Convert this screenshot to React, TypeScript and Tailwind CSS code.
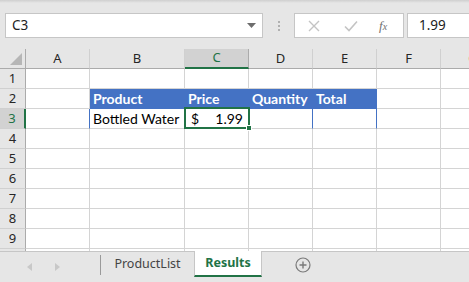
import React from "react";

const cols = ["A", "B", "C", "D", "E", "F", "G"];
const widths = [64, 95, 64, 64, 64, 64, 64];
const rows = [1, 2, 3, 4, 5, 6, 7, 8, 9];

const ui = "font-['Noto_Sans',sans-serif]";
const cellFont = "font-['Lato',sans-serif]";

function RowCells({ row }: { row: number }) {
  if (row === 2) {
    return (
      <>
        <div className="h-5 w-[64px] shrink-0 border-r border-b border-[#d4d4d4]" />
        <div className="h-5 w-[287px] shrink-0 flex items-center bg-[#4472c4] border-b border-[#4472c4] text-white font-bold text-[14px]">
          <span className="w-[95px] pl-[3px]">Product</span>
          <span className="w-[64px] pl-[3px]">Price</span>
          <span className="w-[64px] pl-[3px]">Quantity</span>
          <span className="w-[64px] pl-[3px]">Total</span>
        </div>
        <div className="h-5 w-[64px] shrink-0 border-r border-b border-[#d4d4d4]" />
        <div className="h-5 w-[64px] shrink-0 border-b border-[#d4d4d4]" />
      </>
    );
  }
  if (row === 3) {
    return (
      <>
        <div className="h-5 w-[64px] shrink-0 border-r border-b border-r-[#4472c4] border-b-[#d4d4d4]" />
        <div className="h-5 w-[95px] shrink-0 pl-[3px] flex items-center text-[14px] text-black border-r border-b border-r-[#4472c4] border-b-[#d4d4d4]">
          Bottled Water
        </div>
        <div className="h-5 w-[64px] shrink-0 pl-[6px] pr-[5px] flex items-center justify-between text-[14px] text-black border-r border-b border-r-[#4472c4] border-b-[#d4d4d4]">
          <span>$</span>
          <span>1.99</span>
        </div>
        <div className="h-5 w-[64px] shrink-0 border-r border-b border-r-[#4472c4] border-b-[#d4d4d4]" />
        <div className="h-5 w-[64px] shrink-0 border-r border-b border-r-[#4472c4] border-b-[#d4d4d4]" />
        <div className="h-5 w-[64px] shrink-0 border-r border-b border-[#d4d4d4]" />
        <div className="h-5 w-[64px] shrink-0 border-b border-[#d4d4d4]" />
      </>
    );
  }
  return (
    <>
      {widths.map((w, i) => (
        <div
          key={i}
          className={`h-5 shrink-0 border-b border-[#d4d4d4] ${i < 6 ? "border-r" : ""}`}
          style={{ width: w }}
        />
      ))}
    </>
  );
}

export default function App() {
  return (
    <div className={`w-[469px] h-[282px] overflow-hidden bg-[#e6e6e6] flex flex-col ${ui}`}>
      {/* Formula bar */}
      <div className="h-[3px] bg-gradient-to-b from-[#cfcfcf] to-[#e6e6e6]" />
      <div className="flex items-center h-[46px] pt-[10px] pb-[11px] pl-[5px]">
        <div className="w-[258px] h-[25px] bg-white border border-[#c6c6c6] flex items-center justify-between pl-[6px] pr-[6px]">
          <span className="text-[13.5px] text-[#222]">C3</span>
          <svg width="9" height="5" viewBox="0 0 9 5">
            <path d="M0 0h9L4.5 5z" fill="#6d6d6d" />
          </svg>
        </div>
        <div className="w-[31px] flex flex-col items-center gap-[2px]">
          <span className="w-[2px] h-[2px] bg-[#b0b0b0]" />
          <span className="w-[2px] h-[2px] bg-[#b0b0b0]" />
          <span className="w-[2px] h-[2px] bg-[#b0b0b0]" />
        </div>
        <div className="w-[110px] h-[25px] bg-white border border-[#c6c6c6] flex items-center">
          <svg className="ml-[13px]" width="12" height="12" viewBox="0 0 12 12">
            <path d="M1 1l10 10M11 1L1 11" stroke="#c4c4c4" strokeWidth="1.4" />
          </svg>
          <svg className="ml-[24px]" width="14" height="12" viewBox="0 0 14 12">
            <path d="M1 6.5l4 4L13 1.5" stroke="#c4c4c4" strokeWidth="1.6" fill="none" />
          </svg>
          <span className="ml-[21px] text-[13px] italic text-[#707070] font-['Liberation_Serif',serif]">
            f<span className="text-[10px]">x</span>
          </span>
        </div>
        <div className="ml-[3px] flex-1 h-[25px] bg-white border border-[#c6c6c6] border-r-0 flex items-center pl-[11px]">
          <span className="text-[13.5px] text-[#222]">1.99</span>
        </div>
      </div>

      {/* Sheet */}
      <div className="relative bg-white flex flex-col">
        {/* Column header */}
        <div className="flex h-5 bg-[#e6e6e6]">
          <div className="w-[26px] h-5 shrink-0 border-r border-b border-[#ababab] flex items-end justify-end pr-[3px] pb-[3px]">
            <svg width="12" height="12" viewBox="0 0 12 12">
              <path d="M12 0V12H0z" fill="#b6b6b6" />
            </svg>
          </div>
          {cols.map((c, i) =>
            c === "C" ? (
              <div
                key={c}
                className="h-5 shrink-0 flex items-center justify-center bg-[#d2d2d2] border-r border-[#ababab] border-b-2 border-b-[#217346] text-[13px] text-[#217346]"
                style={{ width: widths[i] }}
              >
                {c}
              </div>
            ) : (
              <div
                key={c}
                className={`h-5 shrink-0 flex items-center justify-center border-b border-[#ababab] text-[13px] text-[#262626] ${i < 6 ? "border-r border-r-[#d0d0d0]" : ""}`}
                style={{ width: widths[i] }}
              >
                {c}
              </div>
            )
          )}
        </div>

        {rows.map((r) => (
          <div key={r} className="flex">
            <div
              className={`w-[26px] h-5 shrink-0 flex items-center justify-center text-[13px] border-b border-[#d0d0d0] ${
                r === 3
                  ? "bg-[#d2d2d2] border-r-2 border-r-[#217346] text-[#217346]"
                  : "bg-[#e6e6e6] border-r border-r-[#ababab] text-[#262626]"
              }`}
            >
              {r}
            </div>
            <div className={`flex ${cellFont}`}>
              <RowCells row={r} />
            </div>
          </div>
        ))}
        <div className="flex h-[2px]">
          <div className="w-[26px] shrink-0 bg-[#e6e6e6] border-r border-[#ababab]" />
          {widths.map((w, i) => (
            <div key={i} className={`shrink-0 ${i < 6 ? "border-r border-[#d4d4d4]" : ""}`} style={{ width: w }} />
          ))}
        </div>

        {/* Active cell */}
        <div className="absolute left-[184px] top-[58px] w-[66px] h-[22px] border-2 border-[#217346] pointer-events-none" />
        <div className="absolute left-[246px] top-[76px] w-[6px] h-[6px] bg-[#217346] border border-white" />
      </div>

      {/* Sheet tabs */}
      <div className="flex-1 flex border-t border-[#c6c6c6] bg-[#e6e6e6]">
        <div className="w-[100px] flex items-center">
          <svg className="ml-[27px]" width="5" height="8" viewBox="0 0 5 8">
            <path d="M5 0v8L0 4z" fill="#c8c8c8" />
          </svg>
          <svg className="ml-[23px]" width="5" height="8" viewBox="0 0 5 8">
            <path d="M0 0v8l5-4z" fill="#c8c8c8" />
          </svg>
        </div>
        <div className="flex h-[25px]">
          <div className="flex items-center">
            <span className="w-px h-[20px] bg-[#9a9a9a]" />
            <span className="w-[93px] text-center text-[12.5px] text-[#444]">ProductList</span>
          </div>
          <div className="w-[68px] bg-white border-x border-[#c6c6c6] border-b-2 border-b-[#217346] flex items-center justify-center -mt-px">
            <span className="text-[12.5px] font-bold text-[#217346]">Results</span>
          </div>
        </div>
        <div className="flex items-center h-[25px] ml-[33px]">
          <svg width="16" height="16" viewBox="0 0 16 16">
            <circle cx="8" cy="8" r="7" fill="none" stroke="#7a7a7a" strokeWidth="1.2" />
            <path d="M8 4.5v7M4.5 8h7" stroke="#7a7a7a" strokeWidth="1.4" />
          </svg>
        </div>
      </div>
    </div>
  );
}
